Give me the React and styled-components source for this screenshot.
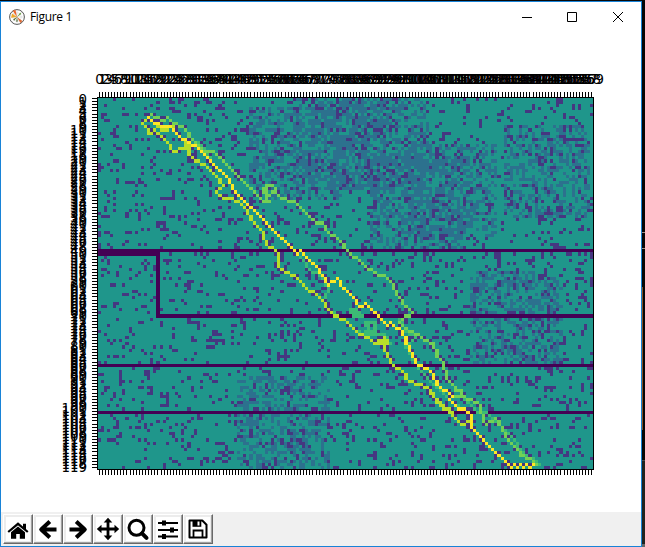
import React from "react";
import styled, { createGlobalStyle } from "styled-components";

const GlobalStyle = createGlobalStyle`
  html, body, #root { margin: 0; height: 100%; overflow: hidden; }
  body { background: #050505; }
`;

const COLS = 160;
const ROWS = 120;
const CELL = 3.1;
const X0 = 97.55;
const Y0 = 97.5;

const palette = {
  d: "#440154",
  p: "#453781",
  b: "#2c718e",
  m: "#3cbb75",
  g: "#73d055",
  l: "#b8de29",
  y: "#fde725",
};

/* ---------- heat map data ---------- */

// Sparse blocks of obstacles: x, y, width, height in cells
const blocks = [
  [49, 3, 30, 30],
  [63, 0, 30, 30],
  [77, 0, 30, 30],
  [88, 19, 30, 30],
  [99, 15, 30, 30],
  [131, 9, 28, 30],
  [120, 56, 30, 30],
  [45, 90, 30, 30],
];

// Routes in canvas pixels, converted to cells when rasterised
const routes = [
  ["m", [[199,142],[212,158]]],
  ["m", [[302,257],[310,268],[318,277],[327,287],[325,293],[323,300],[330,310],[346,322],[357,330],[370,334],[384,336],[390,343]]],
  ["m", [[350,309],[357,311],[363,317],[356,317],[350,312],[360,314]]],
  ["m", [[365,322],[374,322],[374,330],[366,330],[370,326],[366,326],[375,334]]],
  ["m", [[400,319],[407,331],[414,339],[405,347],[416,361],[417,369],[428,377],[440,390],[451,402],[459,405]]],
  ["m", [[463,397],[476,411],[488,413],[500,425],[510,438],[524,451],[538,465]]],
  ["g", [[147,120],[152,113],[158,119],[162,122],[166,119],[173,124],[182,127],[193,138],[205,151],[213,152],[223,161],[237,172],[249,187],[257,194],[263,200],[271,200],[264,193],[266,187],[272,187],[275,191],[268,195],[263,190]]],
  ["g", [[272,191],[277,193],[283,197],[293,200],[307,213],[317,224],[322,222],[330,231],[338,237],[348,250],[363,262],[377,277],[383,277],[393,285],[397,293],[407,307],[411,313],[405,316],[400,321],[407,327],[413,333],[423,337],[433,345],[437,355],[442,361],[443,366],[445,377],[455,387],[461,392],[461,397],[470,399],[480,407],[482,420],[487,425],[495,419],[503,432],[508,440],[517,448],[522,454],[530,458],[537,465]]],
  ["g", [[457,391],[463,391],[462,396],[457,396]]],
  ["l", [[145,121],[142,123],[146,127],[150,132],[155,130],[165,140],[175,152],[183,148],[185,141],[191,145],[185,150],[193,157],[203,164],[213,173],[222,185],[217,191],[222,197],[232,197],[240,201],[247,210],[252,220],[263,232],[263,238],[268,245],[275,250],[278,257],[278,265],[285,272],[293,275],[302,283],[322,302],[328,310],[340,320],[345,319],[357,330],[370,338],[375,343],[383,343],[379,340],[388,340],[383,337],[388,343],[383,347],[387,357],[393,365],[403,373],[410,380],[417,385],[423,384],[430,390],[438,402],[450,413],[458,420],[462,425],[467,422],[471,417]]],
  ["l", [[430,393],[443,405],[453,413]]],
  ["l", [[158,126],[165,131],[173,127]]],
  ["y", [[149,119],[160,127],[171,128],[181,135],[189,141],[194,145],[201,153],[210,161],[217,168],[225,177],[233,188],[242,197],[251,207],[260,217],[268,224],[277,232],[286,243],[293,250],[297,253],[302,250],[312,263],[323,275],[327,284],[331,281],[337,279],[340,284],[353,298],[360,307],[366,305],[377,315],[387,324],[392,321],[402,333],[405,345],[413,357],[417,365],[422,367],[430,373],[438,383],[453,398],[450,401],[455,405],[458,409],[465,408],[470,415],[471,423],[472,428],[480,437],[493,448],[505,462],[511,468],[514,464],[517,468],[520,464],[523,468],[526,464],[530,468],[534,464]]],
];

function buildCells() {
  let seed = 90210;
  const rand = () => {
    seed = (seed * 1664525 + 1013904223) >>> 0;
    return seed / 4294967296;
  };
  const grid = Array.from({ length: ROWS }, () => Array(COLS).fill(null));

  blocks.forEach(([bx, by, bw, bh]) => {
    for (let r = by; r < by + bh; r++)
      for (let c = bx; c < bx + bw; c++)
        if (r < ROWS && c < COLS && rand() < 0.42) grid[r][c] = "b";
  });

  for (let r = 0; r < ROWS; r++)
    for (let c = 0; c < COLS; c++) {
      const left = c > 0 && grid[r][c - 1] === "p";
      const above = r > 0 && grid[r - 1][c] === "p";
      if (rand() < (left || above ? 0.19 : 0.125)) grid[r][c] = "p";
    }

  [49, 86, 101].forEach((r) => grid[r].fill("d"));
  for (let c = 0; c <= 19; c++) grid[50][c] = "d";
  for (let r = 50; r <= 70; r++) grid[r][19] = "d";
  for (let c = 19; c < COLS; c++) grid[70][c] = "d";

  routes.forEach(([tone, pts]) => {
    const cells = pts.map(([x, y]) => [
      Math.floor((x - X0) / CELL),
      Math.floor((y - Y0) / CELL),
    ]);
    for (let i = 1; i < cells.length; i++) {
      const [ax, ay] = cells[i - 1];
      const [bx, by] = cells[i];
      const n = Math.max(Math.abs(bx - ax), Math.abs(by - ay), 1);
      for (let k = 0; k <= n; k++) {
        const c = Math.round(ax + ((bx - ax) * k) / n);
        const r = Math.round(ay + ((by - ay) * k) / n);
        if (r < 0 || c < 0 || r >= ROWS || c >= COLS) continue;
        grid[r][c] = tone;
        // obstacles hug the route on either side
        if (c + 1 < COLS && !grid[r][c + 1] && rand() < 0.22) grid[r][c + 1] = "p";
        if (c > 0 && !grid[r][c - 1] && rand() < 0.15) grid[r][c - 1] = "p";
      }
    }
  });
  return grid;
}

function toPaths(grid) {
  const out = {};
  const px = (c) => Math.round(X0 + c * CELL) - 97;
  const py = (r) => Math.round(Y0 - 0.1 + r * CELL) - 97;
  grid.forEach((row, r) =>
    row.forEach((tone, c) => {
      if (!tone) return;
      const x = px(c);
      const y = py(r);
      const w = px(c + 1) - x;
      out[tone] = (out[tone] || "") + `M${x} ${y}h${w}v${py(r + 1) - y}h${-w}z`;
    })
  );
  return out;
}

const heatPaths = toPaths(buildCells());
const xLabels = Array.from({ length: COLS }, (_, i) => i);
const yLabels = Array.from({ length: ROWS }, (_, i) => i);
const yTicks = yLabels.map((i) => `M0 ${Math.floor(1.55 + i * CELL)}h5v1h-5z`).join("");
const xTicks = xLabels.map((i) => `M${Math.floor(2.05 + i * CELL)} 0v5h1v-5z`).join("");

/* ---------- window chrome ---------- */

const Desktop = styled.div`
  display: flex;
  width: 645px;
  height: 547px;
  box-sizing: border-box;
  padding-top: 1px;
  background: #080808;
`;

const Window = styled.div`
  display: flex;
  flex-direction: column;
  box-sizing: border-box;
  width: 642px;
  height: 546px;
  border: 1px solid #1883d7;
  background: #fff;
`;

const Backdrop = styled.div`
  width: 3px;
  height: 546px;
  background: linear-gradient(
    #050505 0 231px, #9d8e86 231px 232px, #080505 232px 247px,
    #9d8e86 247px 248px, #070605 248px 286px, transparent 286px 429px,
    #070605 429px 459px, #4a4a4a 459px 460px, #20231f 460px 543px, #666 543px
  ), linear-gradient(90deg, #87501f 0 1px, #050505 1px);
`;

const TitleBar = styled.header`
  display: flex;
  align-items: center;
  height: 30px;
  padding-left: 8px;
`;

const Title = styled.h1`
  flex: 1;
  margin: 0 0 0 5px;
  font: 400 12px/18px "Open Sans", "Noto Sans", sans-serif;
  letter-spacing: -0.35px;
  color: #000;
`;

const WindowButton = styled.button`
  display: grid;
  place-items: center;
  width: ${(p) => p.$width || 45}px;
  height: 30px;
  padding: 0;
  border: 0;
  background: transparent;
`;

const Figure = styled.main`
  display: grid;
  grid-template-columns: 91px 502px;
  grid-template-rows: 60px 383px;
  height: 480px;
`;

const TopAxis = styled.div`
  grid-column: 2;
  display: flex;
  align-items: flex-end;
  padding-left: 5.9px;
  height: 56px;
`;

const LeftAxis = styled.div`
  grid-column: 1;
  display: flex;
  flex-direction: column;
  padding: 6.4px 5px 0 0;
`;

const TickLabel = styled.span`
  flex: none;
  display: flex;
  align-items: center;
  justify-content: ${(p) => (p.$side === "left" ? "flex-end" : "center")};
  width: ${(p) => (p.$side === "left" ? "auto" : "3.1px")};
  height: ${(p) => (p.$side === "left" ? "3.1px" : "16px")};
  font: 13.33px/16px "DejaVu Sans", sans-serif;
  color: #000;
  white-space: nowrap;
`;

const Plot = styled.div`
  display: grid;
  grid-template-columns: 5px 497px;
  grid-template-rows: 5px 373px 5px;
`;

const TickMarks = styled.svg`
  display: block;
  grid-column: ${(p) => p.$column};
  grid-row: ${(p) => p.$row};
`;

const HeatMap = styled.svg`
  display: block;
  grid-column: 2;
  grid-row: 2;
  background: #1f968b;
`;

const Toolbar = styled.footer`
  display: flex;
  flex: 1;
  box-sizing: border-box;
  padding: 2px 0 0 2px;
  background: #f0f0f0;
`;

const ToolButton = styled.button`
  display: grid;
  place-items: center;
  box-sizing: border-box;
  width: 30px;
  height: 30px;
  padding: 0;
  border: 1px solid;
  border-color: #fff #696969 #696969 #fff;
  background: #fff;
  box-shadow: inset -1px -1px #a0a0a0, inset 2px 2px #ececec, inset -2px -2px #ececec;
`;

const ToolIcon = styled.svg`
  display: block;
  width: 24px;
  height: 24px;
  fill: none;
  stroke: #000;
  stroke-width: ${(p) => p.$weight || 2};
`;

const tools = [
  { name: "Home", art: <>
    <path d="M2.2 15 12 6.8l9.8 8.2" strokeWidth="2.2" />
    <path d="M17 6.8h3v6l-3-2.5z" fill="#000" stroke="none" />
    <path d="M5 15.3 12 9.6l7 5.7v6.5h-5.2v-4.8h-3.6v4.8H5z" fill="#000" stroke="none" />
  </> },
  { name: "Back", weight: 4, art: <path d="m13.8 4.5-8.6 8 8.6 8M6 12.5h14.5" strokeLinejoin="round" /> },
  { name: "Forward", weight: 4, art: <path d="m10.2 4.5 8.6 8-8.6 8M18 12.5H3.5" strokeLinejoin="round" /> },
  { name: "Pan", weight: 2.8, art: <>
    <path d="M12 4v16M4 12h16" />
    <path d="M12 .8 16.3 5.5H7.7zM12 23.2l4.3-4.7H7.7zM.8 12l4.7-4.3v8.6zM23.2 12l-4.7-4.3v8.6z" fill="#000" stroke="none" />
  </> },
  { name: "Zoom", weight: 3, art: <>
    <circle cx="10.5" cy="10.8" r="7.5" /><path d="m16 16.3 4.5 4.5" strokeWidth="4" strokeLinecap="round" />
  </> },
  { name: "Subplots", art: <>
    <path d="M2 6h20M2 13h20M2 19.5h20" />
    <path d="M8 3.5v5M16 10.5v5M8 17v5" strokeWidth="4" />
  </> },
  { name: "Save", art: <>
    <path d="M3.5 3.5h12.8l4.2 4.2v12.8h-17z" strokeLinejoin="round" />
    <path d="M7.5 20v-6.5h9V20" strokeWidth="1.8" />
    <path d="M6.5 3.5h8.8v6.3H6.5z" fill="#000" stroke="none" /><path d="M11.5 4.5h2v4h-2z" fill="#fff" stroke="none" />
  </> },
];

function AppLogo() {
  return (
    <svg width="16" height="16" viewBox="0 0 16 16">
      <circle cx="8" cy="8" r="7.4" fill="#fff" stroke="#444" strokeWidth=".9" />
      <path d="M8 1v14M1 8h14M3 3l10 10M3 13 13 3" stroke="#c8c8c8" strokeWidth=".5" />
      <circle cx="8" cy="8" r="4.2" fill="none" stroke="#ccc" strokeWidth=".5" />
      <path d="M8 8 3.7 1.8 6.5.9z" fill="#ec632a" />
      <path d="M8 8 2.1 8.8 3 4.5z" fill="#f1a92b" />
      <path d="m8 8 5.5 4.1-2.2 1.8z" fill="#de6a34" />
      <path d="m8 8 3.2-4.4 1.2 1.5z" fill="#71a34e" />
      <path d="m8 8-2.8 3.8-1-1.5zM8 8l-.8 4.7 1.6-.1z" fill="#4f6a35" />
    </svg>
  );
}

export default function App() {
  return (
    <>
      <GlobalStyle />
      <Desktop>
        <Window>
          <TitleBar>
            <AppLogo />
            <Title>Figure 1</Title>
            <WindowButton aria-label="Minimize" $width={44}>
              <svg width="10" height="10"><path d="M0 5.5h10" stroke="#000" /></svg>
            </WindowButton>
            <WindowButton aria-label="Maximize" $width={46}>
              <svg width="10" height="10"><path d="M.5.5h9v9h-9z" fill="none" stroke="#000" /></svg>
            </WindowButton>
            <WindowButton aria-label="Close" $width={46}>
              <svg width="10" height="10"><path d="m0 0 10 10M10 0 0 10" stroke="#000" /></svg>
            </WindowButton>
          </TitleBar>
          <Figure>
            <TopAxis>
              {xLabels.map((n) => <TickLabel key={n}>{n}</TickLabel>)}
            </TopAxis>
            <LeftAxis>
              {yLabels.map((n) => <TickLabel key={n} $side="left">{n}</TickLabel>)}
            </LeftAxis>
            <Plot>
              <TickMarks width="497" height="5" $column={2} $row={1}><path d={xTicks} /></TickMarks>
              <TickMarks width="5" height="373" $column={1} $row={2}><path d={yTicks} /></TickMarks>
              <HeatMap width="497" height="373" shapeRendering="crispEdges">
                {Object.entries(heatPaths).map(([tone, d]) => <path key={tone} d={d} fill={palette[tone]} />)}
                <path d="M.5.5h496v372H.5z" fill="none" stroke="#000" />
              </HeatMap>
              <TickMarks width="497" height="5" $column={2} $row={3}><path d={xTicks} /></TickMarks>
            </Plot>
          </Figure>
          <Toolbar>
            {tools.map(({ name, weight, art }) => (
              <ToolButton key={name} aria-label={name}>
                <ToolIcon viewBox="0 0 24 24" $weight={weight}>{art}</ToolIcon>
              </ToolButton>
            ))}
          </Toolbar>
        </Window>
        <Backdrop />
      </Desktop>
    </>
  );
}
